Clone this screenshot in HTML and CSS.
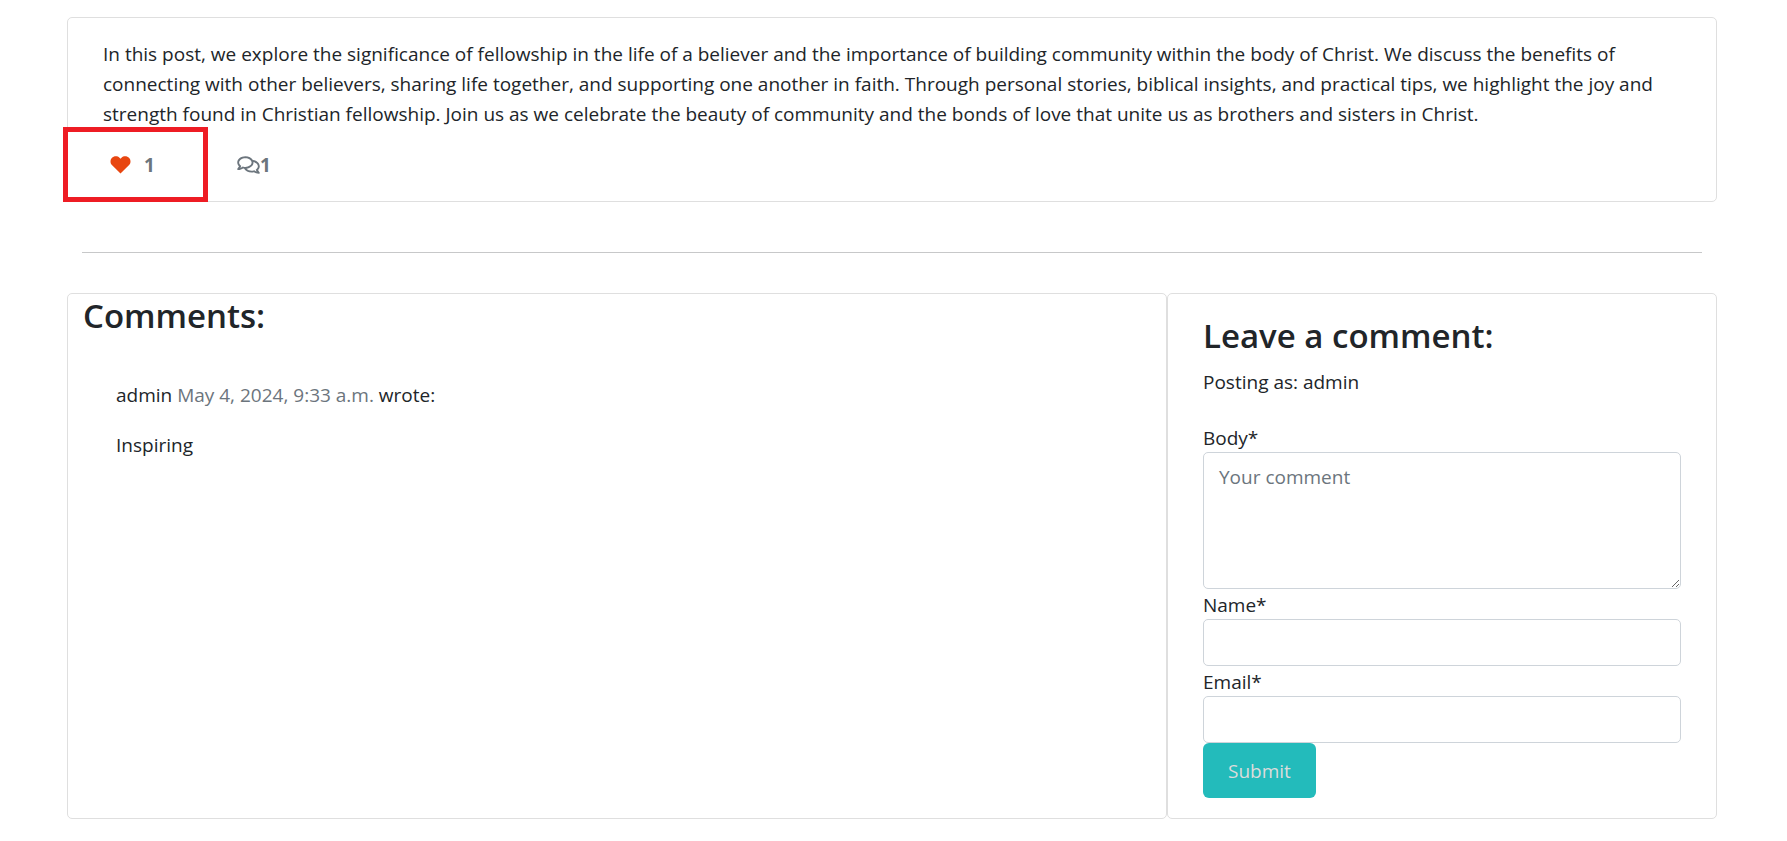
FILE: index.html
```html
<!DOCTYPE html>
<html lang="en">
<head>
<meta charset="utf-8">
<meta name="viewport" content="width=device-width, initial-scale=1">
<title>Post</title>
<link rel="stylesheet" href="styles.css">
</head>
<body>
<main class="container">
  <article class="card post">
    <p class="post-text">In this post, we explore the significance of fellowship in the life of a believer and the importance of building community within the body of Christ. We discuss the benefits of connecting with other believers, sharing life together, and supporting one another in faith. Through personal stories, biblical insights, and practical tips, we highlight the joy and strength found in Christian fellowship. Join us as we celebrate the beauty of community and the bonds of love that unite us as brothers and sisters in Christ.</p>
    <div class="stats">
      <button class="like" type="button" aria-label="Like">
        <svg class="heart" viewBox="0 0 20 18" aria-hidden="true"><path d="M10 17.6 1.4 9C-.5 7-.4 3.700 1.300 1.900 3.300-.2 7-.3 9 1.700l1 1 1-1c2-2 5.700-1.900 7.700.2 1.700 1.800 1.800 5.100-.1 7.100z"/></svg>
      </button>
      <strong class="like-count">1</strong>
      <strong class="comment-count"><svg class="bubbles" viewBox="0 0 576 512" aria-hidden="true"><path d="M532 386.2c27.5-27.1 44-61.1 44-98.2 0-80-76.5-146.1-176.2-157.9C368.3 72.5 294.3 32 208 32 93.1 32 0 103.6 0 192c0 37 16.5 71 44 98.2-15.3 30.7-37.3 54.5-37.7 54.9-6.3 6.7-8.1 16.5-4.4 25 3.6 8.5 12 14 21.2 14 53.5 0 96.7-20.2 125.2-38.8 9.2 2.1 18.7 3.7 28.4 4.9C208.1 407.6 281.8 448 368 448c20.8 0 40.8-2.4 59.8-6.8C456.3 459.7 499.4 480 553 480c9.2 0 17.5-5.5 21.2-14 3.6-8.5 1.9-18.3-4.4-25-.4-.3-22.5-24.1-37.8-54.8zm-392.8-92.3L122.1 305c-14.1 9.1-28.5 16.3-43.1 21.4 2.7-4.7 5.4-9.7 8-14.8l15.5-31.1L77.700 256C64.2 242.6 48 220.7 48 192c0-60.7 73.3-112 160-112s160 51.3 160 112-73.3 112-160 112c-16.5 0-33-1.9-49-5.6l-19.8-4.5zM498.3 352l-24.7 24.4 15.5 31.1c2.6 5.1 5.3 10.1 8 14.8-14.6-5.1-29-12.3-43.1-21.4l-17.1-11.1-19.9 4.6c-16 3.7-32.5 5.6-49 5.6-54 0-102.2-20.1-131.3-49.7C338 339.5 416 272.9 416 192c0-3.4-.4-6.7-.7-10C479.7 196.5 528 238.8 528 288c0 28.7-16.2 50.6-29.7 64z"/></svg>1</strong>
    </div>
    <div class="highlight"></div>
  </article>

  <hr class="divider">

  <div class="row">
    <section class="card comments">
      <h3 class="title">Comments:</h3>
      <div class="comment">
        <p class="comment-line">admin <span class="muted">May 4, 2024, 9:33 a.m.</span> wrote:</p>
        <p class="comment-line">Inspiring</p>
      </div>
    </section>

    <section class="card leave">
      <h3 class="title">Leave a comment:</h3>
      <p class="posting">Posting as: admin</p>
      <form class="form">
        <label class="label" for="body">Body*</label>
        <textarea class="field area" id="body" placeholder="Your comment"></textarea>
        <label class="label" for="name">Name*</label>
        <input class="field" id="name" type="text">
        <label class="label" for="email">Email*</label>
        <input class="field" id="email" type="email">
        <button class="submit" type="submit">Submit</button>
      </form>
    </section>
  </div>
</main>
</body>
</html>
```
FILE: styles.css
```css
* {
  box-sizing: border-box;
}

body {
  margin: 0;
  background: #fff;
  color: #212529;
  font-family: "Open Sans", "Noto Sans", sans-serif;
  font-size: 19px;
  line-height: 30px;
}

p {
  margin: 0;
}

.container {
  padding: 17px 70px 22px 67px;
}

.card {
  border: 1px solid #dfdfdf;
  border-radius: 5px;
}

.post {
  position: relative;
  padding: 21px 35px;
}

.stats {
  display: flex;
  align-items: center;
  margin-top: 21px;
  padding-left: 7px;
  color: #6c757d;
}

.like {
  display: flex;
  padding: 0;
  border: 0;
  background: none;
}

.heart {
  width: 21px;
  height: 18px;
  fill: #e84610;
}

.like-count {
  margin-left: 13px;
}

.comment-count {
  display: flex;
  align-items: center;
  margin-left: 82px;
}

.bubbles {
  width: 23px;
  height: 20px;
  fill: #6c757d;
}

/* Frame round the like counter */
.highlight {
  position: absolute;
  left: -5px;
  bottom: -1px;
  width: 145px;
  height: 75px;
  border: 5px solid #ee1c24;
  pointer-events: none;
}

.divider {
  height: 1px;
  margin: 50px 15px 40px;
  border: 0;
  background: #c7c8c9;
}

.row {
  display: grid;
  grid-template-columns: 2fr 1fr;
}

.title {
  margin: 0;
  padding-top: 2px;
  font-size: 33px;
  font-weight: 600;
  line-height: 40px;
}

.comments {
  padding: 0 15px;
}

.comment {
  display: flex;
  flex-direction: column;
  gap: 20px;
  margin-top: 44px;
  padding-left: 33px;
}

.muted {
  color: #6c757d;
}

.leave {
  padding: 20px 35px;
}

.posting {
  margin: 11px 0 25px;
}

.form {
  display: flex;
  flex-direction: column;
}

.label {
  padding-top: 2px;
  line-height: 28px;
}

.field {
  width: 100%;
  height: 47px;
  padding: 9px 15px;
  border: 1px solid #ced4da;
  border-radius: 5px;
  background: #fff;
  color: #212529;
  font: inherit;
}

.area {
  height: 137px;
  resize: vertical;
}

.field::placeholder {
  color: #6c757d;
  opacity: 1;
}

.submit {
  align-self: flex-start;
  padding: 13px 25px 12px;
  border: 0;
  border-radius: 6px;
  background: #23bbbb;
  color: #dcdcdc;
  font: inherit;
}
```
